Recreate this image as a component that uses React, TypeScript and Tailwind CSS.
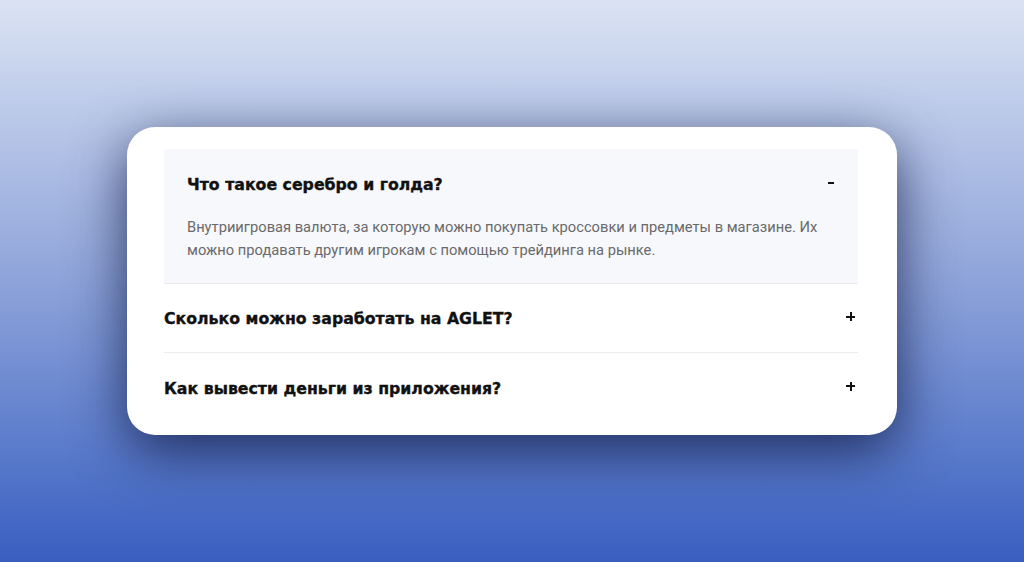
import React from "react";

const Plus = () => (
  <span className="relative block w-[9px] h-[9px]">
    <span className="absolute left-0 top-[3.5px] w-[9px] h-[2px] bg-[#111]" />
    <span className="absolute top-0 left-[3.5px] w-[2px] h-[9px] bg-[#111]" />
  </span>
);

export default function App() {
  const title = "text-[15.75px] font-bold text-[#111] [-webkit-text-stroke:0.35px_#111]";
  return (
    <div
      className="w-[1024px] h-[562px] bg-gradient-to-b from-[#dbe3f3] via-[#8ea3d9] to-[#395ec0] pt-[127px] pl-[127px]"
      style={{ fontFamily: "'DejaVu Sans', sans-serif" }}
    >
      <div className="w-[770px] h-[308px] bg-white rounded-[28px] shadow-[0_16px_55px_rgba(15,25,65,0.8)] pt-[22px] pl-[37px] pr-[39px]">
        <div className="bg-[#f7f8fc] border-b border-[#ececf0]">
          <div className="h-[68px] pt-[3px] flex items-center justify-between pl-[23px] pr-[24px]">
            <span className={title}>Что такое серебро и голда?</span>
            <span className="block w-[6px] h-[2px] bg-[#111] mt-[-3px]" />
          </div>
          <div
            className="pl-[23px] pr-[22px] pb-[21px] mt-[-1px] text-[14.7px] leading-[23px] text-[#6a6a6a]"
            style={{ fontFamily: "Roboto, sans-serif" }}
          >
            Внутриигровая валюта, за которую можно покупать кроссовки и предметы в магазине. Их можно продавать другим игрокам с помощью трейдинга на рынке.
          </div>
        </div>
        <div className="h-[69px] pt-[2px] flex items-center justify-between border-b border-[#ececf0] pr-[3px]">
          <span className={title}>Сколько можно заработать на AGLET?</span>
          <span className="mt-[-5px]"><Plus /></span>
        </div>
        <div className="h-[69px] pt-[2px] flex items-center justify-between pr-[3px]">
          <span className={title}>Как вывести деньги из приложения?</span>
          <span className="mt-[-5px]"><Plus /></span>
        </div>
      </div>
    </div>
  );
}
